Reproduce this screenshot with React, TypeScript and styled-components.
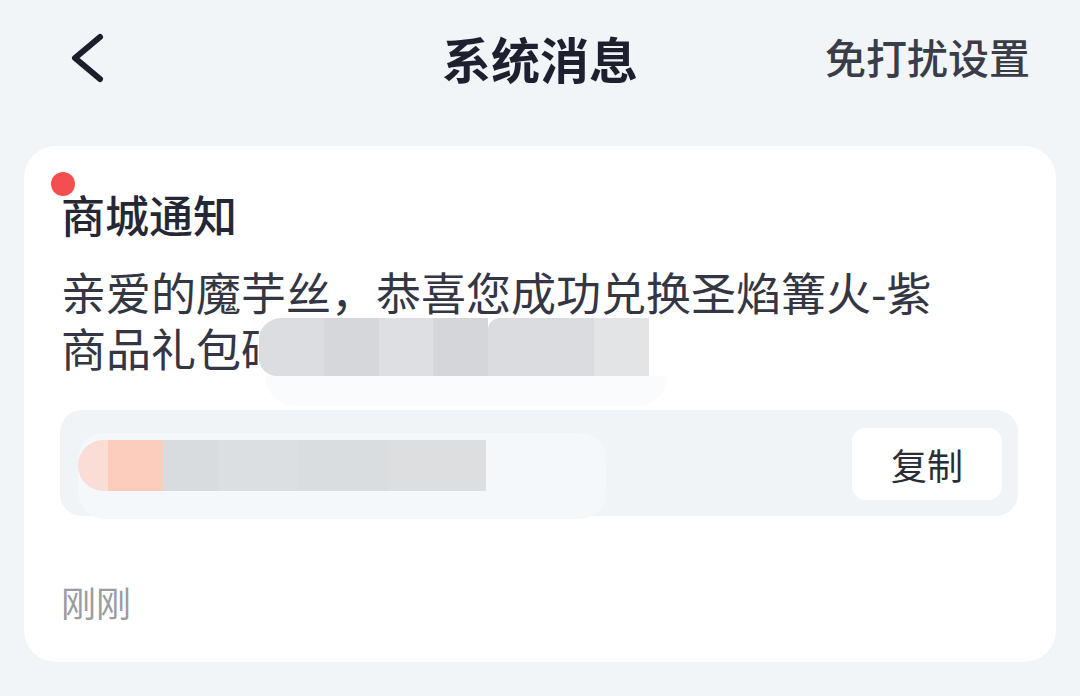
import React from "react";
import styled, { createGlobalStyle } from "styled-components";

const Global = createGlobalStyle`
  html, body { margin: 0; padding: 0; background: #f1f5f8; }
  body { font-family: "Noto Sans CJK SC", "Noto Sans", sans-serif; }
  * { box-sizing: border-box; }
`;

const Page = styled.div`
  width: 1080px;
  height: 696px;
  background: #f1f5f8;
  overflow: hidden;
  display: flex;
  flex-direction: column;
`;

const Header = styled.header`
  height: 118px;
  display: grid;
  grid-template-columns: 1fr auto 1fr;
  align-items: center;
  padding: 0 50px;
`;

const BackButton = styled.div`
  width: 46px;
  height: 56px;
  margin-left: 16px;
  display: flex;
  align-items: center;
`;

const Title = styled.h1`
  margin: 0 0 4px;
  font-size: 49px;
  font-weight: 600;
  color: #1e2030;
  line-height: 1;
`;

const HeaderAction = styled.div`
  justify-self: end;
  margin-bottom: 6px;
  font-size: 41px;
  font-weight: 500;
  color: #3a3c48;
  line-height: 1;
`;

const Card = styled.section`
  position: relative;
  margin: 28px 24px 0;
  height: 516px;
  background: #ffffff;
  border-radius: 32px;
  padding: 40px 38px 0 37px;
  display: flex;
  flex-direction: column;
`;

const Dot = styled.span`
  position: absolute;
  left: 27px;
  top: 26px;
  width: 24px;
  height: 24px;
  border-radius: 50%;
  background: #f44e51;
`;

const CardTitle = styled.h2`
  margin: 0;
  font-size: 44px;
  font-weight: 500;
  line-height: 56px;
  color: #252735;
`;

const Body = styled.p`
  margin: 22px 0 0;
  font-size: 45px;
  font-weight: 400;
  line-height: 56px;
  color: #343644;
  width: 920px;
`;

const Redact = styled.span`
  position: relative;
  display: inline-flex;
  vertical-align: top;
  height: 58px;
  margin-left: -27px;
  margin-top: -2px;
  &::after {
    content: "";
    position: absolute;
    left: 6px;
    right: -18px;
    top: 58px;
    height: 30px;
    border-radius: 0 0 40px 40px;
    background: #fafbfc;
  }
`;

const Seg = styled.span<{ $w: number; $c: string; $r?: string }>`
  display: block;
  width: ${(p) => p.$w}px;
  height: 100%;
  background: ${(p) => p.$c};
  border-radius: ${(p) => p.$r || "0"};
`;

const CodeBox = styled.div`
  margin: 34px 0 0 -1px;
  width: 958px;
  height: 106px;
  border-radius: 22px;
  background: #f0f4f7;
  display: flex;
  align-items: center;
  justify-content: space-between;
  padding: 2px 16px 0 18px;
`;

const CodeRedact = styled.div`
  position: relative;
  display: flex;
  height: 51px;
  margin-top: 2px;
  &::before {
    content: "";
    position: absolute;
    left: 0;
    top: -7px;
    width: 528px;
    height: 86px;
    border-radius: 26px;
    background: #f5f8fa;
  }
`;

const CodeSeg = styled.span<{ $w: number; $c: string; $r?: string }>`
  position: relative;
  display: block;
  width: ${(p) => p.$w}px;
  height: 100%;
  background: ${(p) => p.$c};
  border-radius: ${(p) => p.$r || "0"};
`;

const CopyButton = styled.button`
  width: 150px;
  height: 72px;
  border: none;
  border-radius: 14px;
  background: #ffffff;
  font-family: "Noto Sans CJK SC", "Noto Sans", sans-serif;
  font-size: 36px;
  color: #2a2c38;
  display: flex;
  align-items: center;
  justify-content: center;
  padding: 0;
`;

const Time = styled.div`
  margin-top: 64px;
  font-size: 35px;
  line-height: 44px;
  color: #9a9ba3;
`;

const ChevronLeft = () => (
  <svg width="40" height="56" viewBox="0 0 40 56" fill="none">
    <path
      d="M34 6 L9 27 L34 48"
      stroke="#1d1e2c"
      strokeWidth="6"
      strokeLinecap="round"
      strokeLinejoin="round"
    />
  </svg>
);

export default function App() {
  return (
    <Page>
      <Global />
      <Header>
        <BackButton>
          <ChevronLeft />
        </BackButton>
        <Title>系统消息</Title>
        <HeaderAction>免打扰设置</HeaderAction>
      </Header>
      <Card>
        <Dot />
        <CardTitle>商城通知</CardTitle>
        <Body>
          亲爱的魔芋丝，恭喜您成功兑换圣焰篝火-紫
          <br />
          商品礼包码
          <Redact>
            <Seg $w={65} $c="#dcdde0" $r="22px 0 0 18px" />
            <Seg $w={55} $c="#d6d7da" />
            <Seg $w={54} $c="#dedfe2" />
            <Seg $w={55} $c="#d5d6d9" />
            <Seg $w={106} $c="#dbdcdf" $r="12px 0 0 0" />
            <Seg $w={55} $c="#e3e4e6" />
          </Redact>
        </Body>
        <CodeBox>
          <CodeRedact>
            <CodeSeg $w={30} $c="#f9ddd6" $r="28px 0 0 28px" />
            <CodeSeg $w={55} $c="#fccdbc" />
            <CodeSeg $w={55} $c="#d9dcde" />
            <CodeSeg $w={80} $c="#dcdfe1" />
            <CodeSeg $w={90} $c="#dadddf" />
            <CodeSeg $w={98} $c="#dcdee0" />
          </CodeRedact>
          <CopyButton>复制</CopyButton>
        </CodeBox>
        <Time>刚刚</Time>
      </Card>
    </Page>
  );
}
